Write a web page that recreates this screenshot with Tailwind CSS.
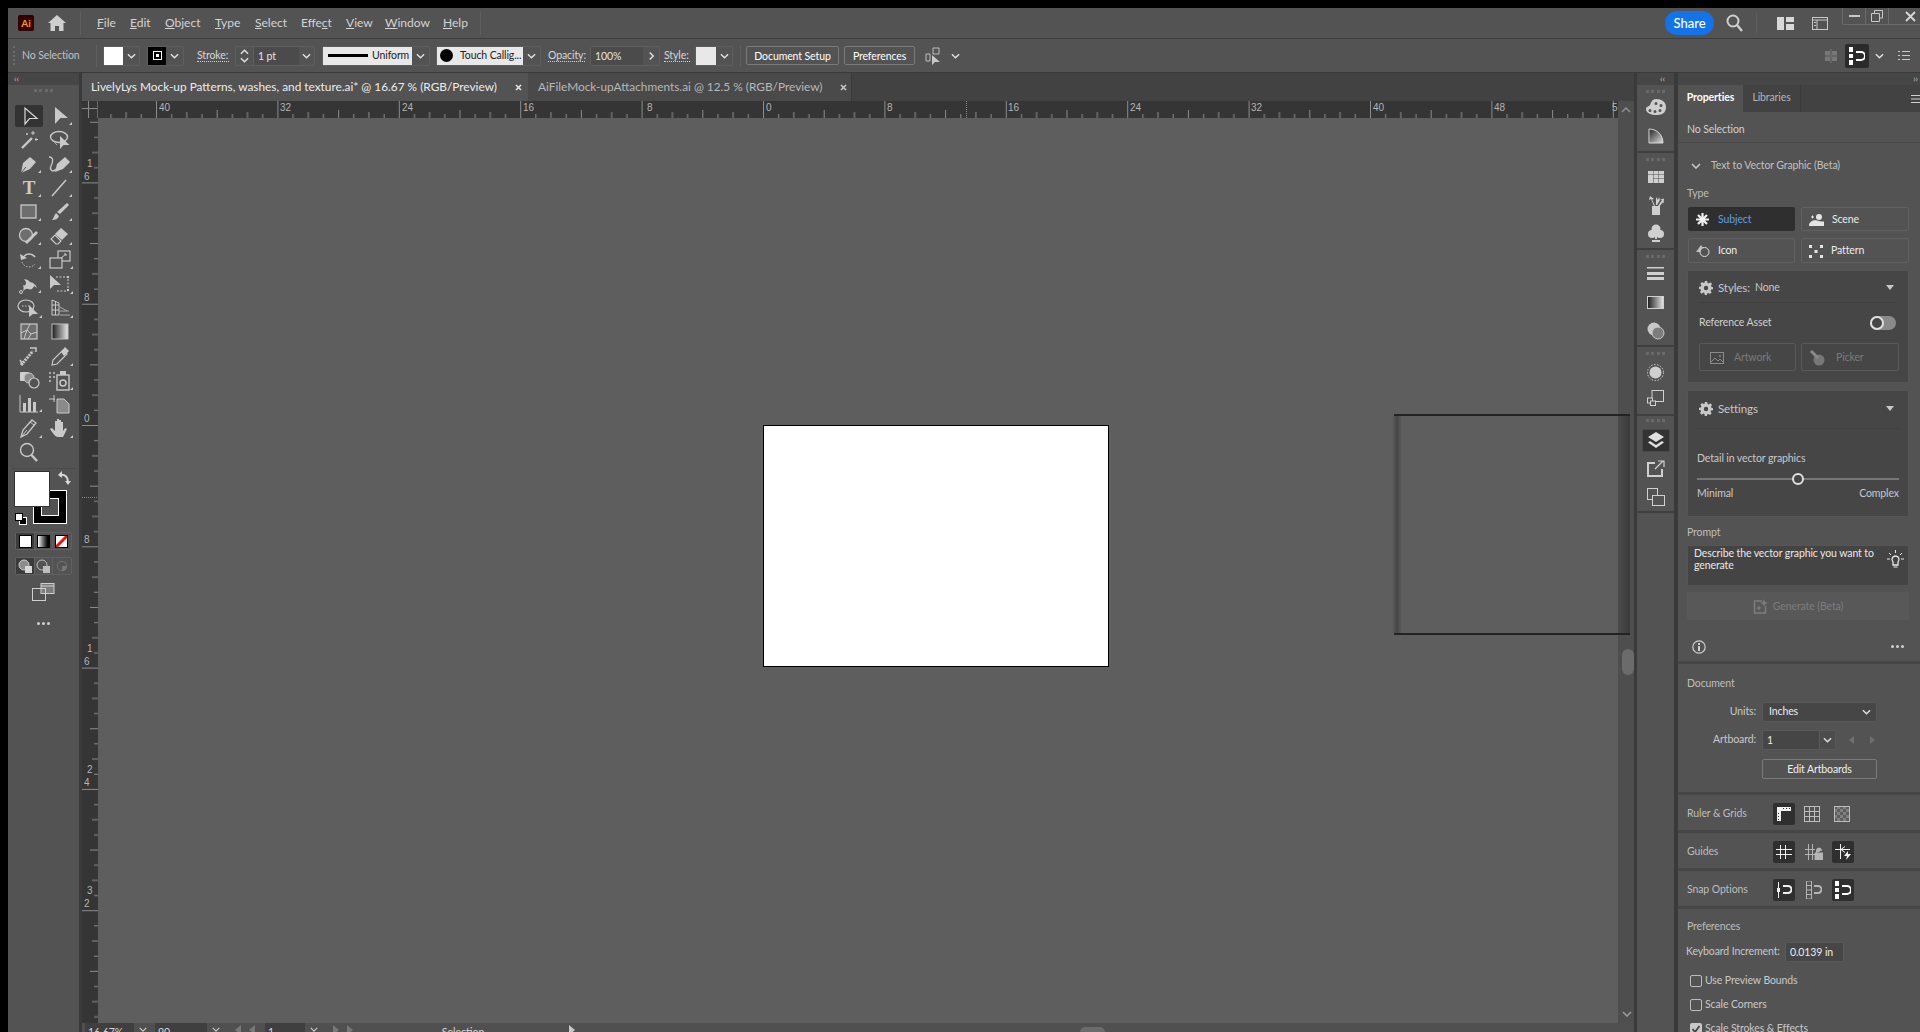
<!DOCTYPE html>
<html lang="en">
<head>
    <meta charset="UTF-8">
    <title>Adobe Illustrator</title>
    <script src="https://cdn.jsdelivr.net/npm/@tailwindcss/browser@4"></script>
</head>
<body class="bg-black overflow-hidden">
<!-- shared small glyphs -->
<svg class="absolute w-0 h-0">
    <defs>
        <symbol id="chev" viewBox="0 0 10 6"><path d="M1 1l4 4 4-4" fill="none" stroke="currentColor" stroke-width="1.6"/></symbol>
        <symbol id="gear" viewBox="0 0 16 16"><path fill="currentColor" fill-rule="evenodd" d="M6.6 0h2.8l.4 2.2 1.3.6L12.9 1.500l2 2-1.300 1.800.6 1.300L16 7v2.400l-2.200.4-.6 1.300 1.300 1.800-2 2-1.800-1.300-1.300.6L9 16H6.600l-.4-2.200-1.300-.6-1.800 1.300-2-2 1.300-1.800-.6-1.300L0 9V6.600l2.200-.4.6-1.300L1.500 3.100l2-2 1.800 1.300 1.300-.6zM8 5.500a2.500 2.500 0 100 5 2.500 2.500 0 000-5z"/></symbol>
        <symbol id="cn" viewBox="0 0 4 4"><path d="M4 0v4H0z" fill="currentColor"/></symbol>
        <pattern id="htick" patternUnits="userSpaceOnUse" x="-63.4" y="0" width="121.4" height="17">
            <path d="M.5 0v17M15.700 13v4M30.800 11v6M46 13v4M61.200 9v8M76.400 13v4M91.500 11v6M106.700 13v4" stroke="#8c8c8c" fill="none"/>
        </pattern>
        <pattern id="vtick" patternUnits="userSpaceOnUse" x="0" y="64.400" width="16" height="121.300">
            <path d="M0 .5h16M12 15.700h4M10 30.800h6M12 46h4M8 61.200h8M12 76.400h4M10 91.500h6M12 106.700h4" stroke="#8c8c8c" fill="none"/>
        </pattern>
        <pattern id="chk" patternUnits="userSpaceOnUse" width="6" height="6">
            <rect width="6" height="6" fill="#808080"/><path d="M0 0h3v3H0zM3 3h3v3H3z" fill="#5e5e5e"/>
        </pattern>
        <linearGradient id="grad"><stop offset="0" stop-color="#1c1c1c"/><stop offset="1" stop-color="#e8e8e8"/></linearGradient>
    </defs>
</svg>

<div class="w-[1920px] h-[1032px] pt-2 pl-2 flex flex-col overflow-hidden font-['Lato','Liberation_Sans',sans-serif] text-[11px] text-[#d2d2d2]">

    <!-- Title bar -->
    <div class="h-[30px] shrink-0 flex items-center bg-[#535353] text-[12px] text-[#d4d4d4]">
        <div class="ml-[10px] w-[16px] h-[16px] rounded-[2px] bg-[#330000] text-[#ff9a00] text-[10px] font-bold leading-[16px] text-center">Ai</div>
        <svg class="ml-[14px] w-[18px] h-[16px]" viewBox="0 0 18 16"><path fill="#cfcfcf" d="M9 0l9 8h-2.500v8h-4.500v-5H7v5H2.500V8H0z"/></svg>
        <div class="ml-[14px] w-px h-[24px] bg-[#5e5e5e]"></div>
        <div class="ml-[16px] flex">
            <span class="w-[33px]"><u>F</u>ile</span>
            <span class="w-[35px]"><u>E</u>dit</span>
            <span class="w-[50px]"><u>O</u>bject</span>
            <span class="w-[40px]"><u>T</u>ype</span>
            <span class="w-[46px]"><u>S</u>elect</span>
            <span class="w-[45px]">Effe<u>c</u>t</span>
            <span class="w-[39px]"><u>V</u>iew</span>
            <span class="w-[58px]"><u>W</u>indow</span>
            <span class="w-[37px]"><u>H</u>elp</span>
        </div>
        <div class="w-px h-[24px] bg-[#5e5e5e]"></div>
        <div class="ml-auto w-[49px] h-[24px] rounded-full bg-[#1473e6] text-white text-[13px] font-medium leading-[24px] text-center">Share</div>
        <svg class="ml-[12px] w-[17px] h-[18px]" viewBox="0 0 17 18"><circle cx="7" cy="7" r="5.500" fill="none" stroke="#cfcfcf" stroke-width="2"/><path d="M11 11l5 6" stroke="#cfcfcf" stroke-width="2.400"/></svg>
        <div class="ml-[13px] w-px h-[20px] bg-[#5e5e5e]"></div>
        <svg class="ml-[20px] w-[17px] h-[13px]" viewBox="0 0 17 13"><path fill="#d8d8d8" d="M0 0h7v13H0zM9 0h8v5H9zM9 7h8v6H9z"/></svg>
        <svg class="ml-[18px] w-[16px] h-[13px]" viewBox="0 0 16 13"><rect x=".5" y=".5" width="15" height="12" fill="none" stroke="#c8c8c8"/><path d="M0 3h16M5 3v10" stroke="#c8c8c8"/><path d="M2 5h2v1H2zM2 8h2v1H2z" fill="#c8c8c8"/></svg>
        <div class="ml-[14px] w-[78px] h-[17px] self-start flex border-l border-b border-[#6a6a6a] rounded-bl-[2px]">
            <div class="w-[23px] flex items-center justify-center border-r border-[#6a6a6a]"><div class="w-[11px] h-[2px] bg-[#c8c8c8]"></div></div>
            <div class="w-[23px] flex items-center justify-center border-r border-[#6a6a6a]">
                <svg class="w-[12px] h-[12px]" viewBox="0 0 12 12"><path d="M3.500 3V.5h8V8H9M.5 3.500h8v8h-8z" fill="none" stroke="#c8c8c8"/></svg>
            </div>
            <div class="flex-1 flex items-center justify-center pl-[12px]">
                <svg class="w-[11px] h-[11px]" viewBox="0 0 11 11"><path d="M1 1l9 9M10 1l-9 9" stroke="#d8d8d8" stroke-width="1.800"/></svg>
            </div>
        </div>
    </div>

    <!-- Control bar -->
    <div class="h-[34px] shrink-0 flex items-center bg-[#535353] border-t border-[#3d3d3d] text-[#d8d8d8] text-[10.5px] tracking-[-0.01em]">
        <div class="ml-[5px] w-[3px] h-[19px] border-l-2 border-dotted border-[#6d6d6d]"></div>
        <span class="ml-[6px] w-[56px] whitespace-nowrap text-[#c0c0c0]">No Selection</span>
        <div class="ml-[18px] w-px h-[22px] bg-[#5f5f5f]"></div>
        <div class="ml-[6px] flex h-[20px] w-[37px] border border-[#5f5f5f] rounded-[2px]">
            <div class="w-[19px] bg-white"></div>
            <div class="flex-1 flex items-center justify-center text-[#e0e0e0]"><svg class="w-[9px] h-[6px]"><use href="#chev"/></svg></div>
        </div>
        <div class="ml-[7px] flex h-[20px] w-[37px] border border-[#5f5f5f] rounded-[2px]">
            <div class="w-[18px] bg-black flex items-center justify-center"><div class="w-[9px] h-[9px] border border-white flex items-center justify-center"><div class="w-[3px] h-[3px] bg-white"></div></div></div>
            <div class="flex-1 flex items-center justify-center text-[#e0e0e0]"><svg class="w-[9px] h-[6px]"><use href="#chev"/></svg></div>
        </div>
        <span class="ml-[13px] w-[32px] border-b border-dotted border-[#d0d0d0] leading-[12px]">Stroke:</span>
        <div class="ml-[6px] flex h-[20px] w-[80px] border border-[#5f5f5f] rounded-[2px]">
            <div class="w-[18px] flex flex-col items-center justify-center gap-[2px] border-r border-[#5f5f5f] text-[#e0e0e0]">
                <svg class="w-[9px] h-[6px] rotate-180"><use href="#chev"/></svg>
                <svg class="w-[9px] h-[6px]"><use href="#chev"/></svg>
            </div>
            <div class="w-[45px] bg-[#4b4b4b] pl-[4px] leading-[18px] text-[#e4e4e4]">1 pt</div>
            <div class="flex-1 flex items-center justify-center text-[#e0e0e0]"><svg class="w-[9px] h-[6px]"><use href="#chev"/></svg></div>
        </div>
        <div class="ml-[7px] flex h-[20px] w-[108px] border border-[#5f5f5f] rounded-[2px]">
            <div class="w-[89px] bg-[#e8e8e8] flex items-center pl-[5px] text-[#222] whitespace-nowrap overflow-hidden"><div class="w-[40px] h-[3px] bg-black mr-[4px] shrink-0"></div>Uniform</div>
            <div class="flex-1 flex items-center justify-center text-[#e0e0e0]"><svg class="w-[9px] h-[6px]"><use href="#chev"/></svg></div>
        </div>
        <div class="ml-[6px] flex h-[20px] w-[105px] border border-[#5f5f5f] rounded-[2px]">
            <div class="w-[86px] bg-[#e8e8e8] flex items-center pl-[3px] text-[#222] whitespace-nowrap"><div class="w-[13px] h-[13px] rounded-full bg-black mr-[7px] shrink-0"></div>Touch Callig...</div>
            <div class="flex-1 flex items-center justify-center text-[#e0e0e0]"><svg class="w-[9px] h-[6px]"><use href="#chev"/></svg></div>
        </div>
        <span class="ml-[7px] w-[37px] border-b border-dotted border-[#d0d0d0] leading-[12px]">Opacity:</span>
        <div class="ml-[5px] flex h-[20px] w-[70px] border border-[#5f5f5f] rounded-[2px]">
            <div class="w-[52px] bg-[#4b4b4b] pl-[4px] leading-[18px] text-[#e4e4e4]">100%</div>
            <div class="flex-1 flex items-center justify-center text-[#e0e0e0]"><svg class="w-[9px] h-[6px] -rotate-90"><use href="#chev"/></svg></div>
        </div>
        <span class="ml-[4px] w-[26px] border-b border-dotted border-[#d0d0d0] leading-[12px]">Style:</span>
        <div class="ml-[5px] flex h-[20px] w-[38px] border border-[#5f5f5f] rounded-[2px]">
            <div class="w-[20px] bg-[#e8e8e8]"></div>
            <div class="flex-1 flex items-center justify-center text-[#e0e0e0]"><svg class="w-[9px] h-[6px]"><use href="#chev"/></svg></div>
        </div>
        <div class="ml-[7px] w-px h-[22px] bg-[#5f5f5f]"></div>
        <div class="ml-[5px] w-[93px] h-[19px] border border-[#7a7a7a] rounded-[2px] text-center leading-[18px] text-white">Document Setup</div>
        <div class="ml-[5px] w-[71px] h-[19px] border border-[#7a7a7a] rounded-[2px] text-center leading-[18px] text-white">Preferences</div>
        <svg class="ml-[10px] w-[17px] h-[18px]" viewBox="0 0 17 18"><path d="M1 7h4v7H1zM8 1h6v6H8z" fill="none" stroke="#bdbdbd"/><path d="M7 8v10l3-3h5z" fill="#c8c8c8"/></svg>
        <svg class="ml-[9px] w-[9px] h-[6px] text-[#e0e0e0]"><use href="#chev"/></svg>
        <svg class="ml-auto w-[12px] h-[14px]" viewBox="0 0 12 14"><path fill="#777" d="M0 2h5v4H0zM7 2h5v4H7zM0 8h5v4H0zM7 8h5v4H7z"/><path d="M6 0v14M0 7h12" stroke="#777"/></svg>
        <div class="ml-[8px] w-[24px] h-[24px] rounded-[2px] bg-[#2b2b2b] flex items-center justify-center">
            <svg class="w-[16px] h-[18px]" viewBox="0 0 16 18"><path fill="#fff" d="M0 0h4v5H0zM0 7h4v4H0zM0 13h4v5H0z"/><path d="M7 5h5a3.500 3.500 0 010 8H7" fill="none" stroke="#fff" stroke-width="2"/></svg>
        </div>
        <svg class="ml-[6px] w-[9px] h-[6px] text-[#e0e0e0]"><use href="#chev"/></svg>
        <svg class="ml-[14px] mr-[10px] w-[12px] h-[11px]" viewBox="0 0 12 11"><path d="M4 1.500h8M4 5.500h8M4 9.500h8" stroke="#c8c8c8"/><path d="M0 1h2v1H0zM0 5h2v1H0zM0 9h2v1H0z" fill="#c8c8c8"/></svg>
    </div>

    <!-- Work area -->
    <div class="h-[960px] shrink-0 flex bg-[#3a3a3a]">

        <!-- Tools -->
        <div class="w-[71px] shrink-0 flex flex-col border-t border-[#3a3a3a] bg-[#535353]">
            <div class="h-[12px] bg-[#464646] text-[#bdbdbd] text-[9px] leading-[11px] pl-[6px]">‹‹</div>
            <div class="h-[20px] flex items-start justify-center pt-[4px]"><div class="w-[19px] h-[3px] border-t-[3px] border-dotted border-[#696969]"></div></div>
            <div class="grid grid-cols-[31px_31px] auto-rows-[24px] pl-[5px] text-[#c9c9c9]">
                <svg class="w-[28px] h-[22px] mx-auto bg-[#333] rounded-[2px]" viewBox="0 0 28 22"><path d="M10 3v16l4.500-5.500H22z" fill="none" stroke="#d8d8d8" stroke-width="1.200"/></svg>
                <svg class="w-[28px] h-[22px] mx-auto" viewBox="0 0 28 22"><path d="M9 2v17l5.500-6H22z" fill="currentColor"/><use href="#cn" x="23" y="17" width="3" height="3"/></svg>
                <svg class="w-[28px] h-[22px] mx-auto" viewBox="0 0 28 22"><path d="M7 19L17 9" stroke="currentColor" stroke-width="2.400"/><path d="M18 2v4M16 4h4M12 4v2M11 5h2M21 9v3M20 10.500h3" stroke="currentColor"/></svg>
                <svg class="w-[28px] h-[22px] mx-auto" viewBox="0 0 28 22"><ellipse cx="13" cy="8" rx="8.500" ry="5.500" fill="none" stroke="currentColor" stroke-width="1.400"/><path d="M14 7v13l3.500-4 6 0z" fill="currentColor"/><path d="M8 12c1 2 2 3 3 4" stroke="currentColor"/></svg>
                <svg class="w-[28px] h-[22px] mx-auto" viewBox="0 0 28 22"><path d="M6 20l2-10 7-6 6 5-6 7z" fill="currentColor"/><path d="M6 20l5-6" stroke="#535353"/><use href="#cn" x="23" y="17" width="3" height="3"/></svg>
                <svg class="w-[28px] h-[22px] mx-auto" viewBox="0 0 28 22"><path d="M3 4c5 0 4 5 2 9s2 7 5 3" fill="none" stroke="currentColor" stroke-width="1.300"/><path d="M9 19l2-8 8-7 5 5-7 7z" fill="currentColor"/><use href="#cn" x="23" y="17" width="3" height="3"/></svg>
                <svg class="w-[28px] h-[22px] mx-auto" viewBox="0 0 28 22"><text x="14" y="17" text-anchor="middle" font-family="Liberation Serif" font-weight="700" font-size="19" fill="currentColor">T</text><use href="#cn" x="23" y="17" width="3" height="3"/></svg>
                <svg class="w-[28px] h-[22px] mx-auto" viewBox="0 0 28 22"><path d="M6 19L20 3" stroke="currentColor" stroke-width="1.500"/><use href="#cn" x="23" y="17" width="3" height="3"/></svg>
                <svg class="w-[28px] h-[22px] mx-auto" viewBox="0 0 28 22"><rect x="6" y="4" width="15" height="13" fill="#6e6e6e" stroke="currentColor" stroke-width="1.300"/><use href="#cn" x="23" y="17" width="3" height="3"/></svg>
                <svg class="w-[28px] h-[22px] mx-auto" viewBox="0 0 28 22"><path d="M21 2l2 2-9 9-3-2z" fill="currentColor"/><path d="M10 12l3 3c-1 3-4 4-7 4 2-2 2-5 4-7z" fill="currentColor"/><use href="#cn" x="23" y="17" width="3" height="3"/></svg>
                <svg class="w-[28px] h-[22px] mx-auto" viewBox="0 0 28 22"><circle cx="11" cy="10" r="6.500" fill="#6e6e6e" stroke="currentColor" stroke-width="1.300"/><path d="M11 18L22 7" stroke="currentColor" stroke-width="2.600"/><use href="#cn" x="23" y="17" width="3" height="3"/></svg>
                <svg class="w-[28px] h-[22px] mx-auto" viewBox="0 0 28 22"><path d="M15 3l7 6-6 6-7-6z" fill="currentColor"/><path d="M9 10l6 6-3 3-2 0-5-5z" fill="none" stroke="currentColor" stroke-width="1.200"/><use href="#cn" x="23" y="17" width="3" height="3"/></svg>
                <svg class="w-[28px] h-[22px] mx-auto" viewBox="0 0 28 22"><path d="M8 9a7 7 0 0112-1" fill="none" stroke="currentColor" stroke-width="1.500"/><path d="M5 5l1 6 6-2z" fill="currentColor"/><path d="M7 13a7.500 7.500 0 0013 2" fill="none" stroke="currentColor" stroke-dasharray="1.500 1.500"/><use href="#cn" x="23" y="17" width="3" height="3"/></svg>
                <svg class="w-[28px] h-[22px] mx-auto" viewBox="0 0 28 22"><rect x="12" y="2" width="12" height="10" fill="none" stroke="currentColor" stroke-width="1.200"/><rect x="4" y="9" width="12" height="10" fill="#535353" stroke="currentColor" stroke-width="1.200"/><path d="M15 9l5-4M18 5h2v2" fill="none" stroke="currentColor"/><use href="#cn" x="24" y="17" width="3" height="3"/></svg>
                <svg class="w-[28px] h-[22px] mx-auto" viewBox="0 0 28 22"><path d="M6 19c3-1 3-4 2-7 2 1 3 0 3-3l-2-3 4 1c2 3 4 2 5 3s3 2 4 5l-3-2c-1 3-3 4-6 3s-4 2-6 3z" fill="currentColor"/><circle cx="6" cy="19" r="1.500" fill="#535353" stroke="currentColor"/><use href="#cn" x="23" y="17" width="3" height="3"/></svg>
                <svg class="w-[28px] h-[22px] mx-auto" viewBox="0 0 28 22"><path d="M10 4h12v14H10" fill="none" stroke="currentColor" stroke-dasharray="2 1.500"/><path d="M4 2v14l4-4h7z" fill="currentColor"/><path d="M21 3h2v2h-2zM21 16h2v2h-2z" fill="currentColor"/><use href="#cn" x="24" y="18" width="3" height="3"/></svg>
                <svg class="w-[28px] h-[22px] mx-auto" viewBox="0 0 28 22"><ellipse cx="11" cy="9" rx="8" ry="6" fill="none" stroke="currentColor" stroke-width="1.200"/><path d="M7 9h7" stroke="currentColor" stroke-dasharray="1.500 1.500"/><path d="M14 8v12l4-3 5 0z" fill="currentColor"/><use href="#cn" x="24" y="18" width="3" height="3"/></svg>
                <svg class="w-[28px] h-[22px] mx-auto" viewBox="0 0 28 22"><path d="M6 3l7 3v12H6zM6 8h7M6 13h7M9.500 4v14" fill="none" stroke="currentColor"/><path d="M14 10l7 4M14 14h9M14 18h10" stroke="#a9a9a9"/><use href="#cn" x="24" y="18" width="3" height="3"/></svg>
                <svg class="w-[28px] h-[22px] mx-auto" viewBox="0 0 28 22"><rect x="6" y="3" width="16" height="15" fill="#6e6e6e" stroke="currentColor" stroke-width="1.200"/><path d="M6 12l6-3 3-6M12 9l4 4 6-2M16 13l-3 5M9 18l3-9" fill="none" stroke="currentColor"/></svg>
                <svg class="w-[28px] h-[22px] mx-auto" viewBox="0 0 28 22"><rect x="6" y="3" width="16" height="15" fill="url(#grad)" stroke="#bdbdbd"/></svg>
                <svg class="w-[28px] h-[22px] mx-auto" viewBox="0 0 28 22"><path d="M6 20L18 6" stroke="currentColor" stroke-width="3" stroke-dasharray="2 1"/><path d="M15 3h6v4M5 15l3 5" stroke="currentColor" stroke-width="1.500" fill="none"/></svg>
                <svg class="w-[28px] h-[22px] mx-auto" viewBox="0 0 28 22"><path d="M6 20l1-5L17 5l4 4-10 10z" fill="none" stroke="currentColor" stroke-width="1.200"/><path d="M15 7l4-5 4 4-5 5z" fill="currentColor"/><use href="#cn" x="24" y="18" width="3" height="3"/></svg>
                <svg class="w-[28px] h-[22px] mx-auto" viewBox="0 0 28 22"><rect x="5" y="3" width="9" height="9" fill="#cfcfcf" rx="1"/><circle cx="14" cy="9" r="5" fill="#8a8a8a" stroke="currentColor"/><circle cx="19" cy="14" r="5" fill="#535353" stroke="currentColor" stroke-width="1.200"/></svg>
                <svg class="w-[28px] h-[22px] mx-auto" viewBox="0 0 28 22"><path d="M3 3h2v2H3zM7 3h2v2H7zM3 7h2v2H3zM7 7h2v2H7zM3 11h2v2H3z" fill="#a9a9a9"/><rect x="11" y="6" width="12" height="15" fill="none" stroke="currentColor" stroke-width="1.400"/><rect x="14" y="2" width="6" height="4" fill="currentColor"/><circle cx="17" cy="14" r="3" fill="none" stroke="currentColor" stroke-width="1.500"/><use href="#cn" x="24" y="18" width="3" height="3"/></svg>
                <svg class="w-[28px] h-[22px] mx-auto" viewBox="0 0 28 22"><path d="M5 2v17h18" fill="none" stroke="currentColor"/><path d="M8 10h3v9H8zM13 5h3v14h-3zM18 9h3v10h-3z" fill="currentColor"/><use href="#cn" x="24" y="16" width="3" height="3"/></svg>
                <svg class="w-[28px] h-[22px] mx-auto" viewBox="0 0 28 22"><path d="M3 6h6M8 2v7" stroke="currentColor"/><path d="M11 6h7l5 5v9H11z" fill="#8a8a8a" stroke="currentColor"/></svg>
                <svg class="w-[28px] h-[22px] mx-auto" viewBox="0 0 28 22"><path d="M6 20l2-7 9-10 4 3-9 11z" fill="none" stroke="currentColor" stroke-width="1.300"/><path d="M15 5l4 3" stroke="currentColor"/><path d="M7 19l5-6" stroke="currentColor"/><use href="#cn" x="24" y="18" width="3" height="3"/></svg>
                <svg class="w-[28px] h-[22px] mx-auto" viewBox="0 0 28 22"><path d="M12 20c-3 0-5-4-8-8l2-1 3 3V4h2v6-8h2v8V3h2v7-5h2v9l2-3 2 1-4 8z" fill="currentColor"/><use href="#cn" x="24" y="18" width="3" height="3"/></svg>
                <svg class="w-[28px] h-[22px] mx-auto" viewBox="0 0 28 22"><circle cx="12" cy="9" r="6.500" fill="none" stroke="currentColor" stroke-width="1.400"/><path d="M16.500 14l5.500 6" stroke="currentColor" stroke-width="2.400"/></svg>
            </div>
            <div class="mt-[3px] mx-[4px] h-px bg-[#4a4a4a]"></div>
            <!-- fill and stroke -->
            <div class="relative h-[70px] mt-[2px]">
                <div class="absolute left-[25px] top-[19px] w-[34px] h-[34px] bg-black border border-white flex items-center justify-center"><div class="w-[18px] h-[18px] bg-[#535353] border border-white"></div></div>
                <div class="absolute left-[6px] top-[0px] w-[36px] h-[36px] bg-white border border-[#333]"></div>
                <svg class="absolute left-[50px] top-[0px] w-[13px] h-[14px]" viewBox="0 0 13 14"><path d="M2 4c5-1 8 2 8 7" fill="none" stroke="#d8d8d8" stroke-width="2"/><path d="M4 0v7L0 4zM7 10h6l-3 4z" fill="#d8d8d8"/></svg>
                <div class="absolute left-[11px] top-[46px] w-[8px] h-[8px] bg-black border border-white"></div>
                <div class="absolute left-[7px] top-[42px] w-[8px] h-[8px] bg-white border border-black"></div>
            </div>
            <div class="mt-[-9px] mx-[7px] h-[18px] grid grid-cols-3 border border-[#616161] rounded-[2px]">
                <div class="bg-[#3b3b3b] flex items-center justify-center"><div class="w-[13px] h-[13px] bg-white border border-black"></div></div>
                <div class="flex items-center justify-center border-x border-[#616161]"><div class="w-[13px] h-[13px] border border-black bg-gradient-to-r from-white to-black"></div></div>
                <svg class="w-[13px] h-[13px] m-auto" viewBox="0 0 13 13"><rect width="13" height="13" fill="#fff"/><path d="M0 13L13 0" stroke="#e11" stroke-width="3"/><rect x=".5" y=".5" width="12" height="12" fill="none" stroke="#000"/></svg>
            </div>
            <div class="mt-[7px] mx-[7px] h-[18px] grid grid-cols-3 border border-[#616161] rounded-[2px]">
                <div class="bg-[#3b3b3b] flex items-center justify-center"><svg class="w-[14px] h-[14px]" viewBox="0 0 14 14"><circle cx="6" cy="6" r="5" fill="#8c8c8c" stroke="#d0d0d0"/><rect x="7" y="7" width="7" height="7" fill="#d8d8d8"/></svg></div>
                <div class="flex items-center justify-center border-x border-[#616161]"><svg class="w-[14px] h-[14px]" viewBox="0 0 14 14"><circle cx="6" cy="6" r="5" fill="#535353" stroke="#bdbdbd"/><rect x="7" y="7" width="7" height="7" fill="#bdbdbd"/></svg></div>
                <svg class="w-[12px] h-[12px] m-auto" viewBox="0 0 14 14"><circle cx="7" cy="7" r="5.500" fill="none" stroke="#777"/><path d="M7 7h6a6 6 0 01-6 6z" fill="#777"/></svg>
            </div>
            <svg class="mt-[8px] mx-auto w-[23px] h-[18px]" viewBox="0 0 23 18"><rect x="9" y=".5" width="13" height="10" fill="#7c7c7c" stroke="#cfcfcf"/><path d="M9 3h13" stroke="#cfcfcf"/><rect x=".5" y="5.500" width="13" height="12" fill="none" stroke="#cfcfcf"/></svg>
            <div class="mt-[21px] flex justify-center gap-[2px]">
                <div class="w-[3px] h-[3px] rounded-full bg-[#d0d0d0]"></div>
                <div class="w-[3px] h-[3px] rounded-full bg-[#d0d0d0]"></div>
                <div class="w-[3px] h-[3px] rounded-full bg-[#d0d0d0]"></div>
            </div>
        </div>

        <!-- Document area -->
        <div class="ml-[3px] w-[1552px] shrink-0 flex flex-col">
            <div class="h-[29px] shrink-0 flex bg-[#424242] border-t border-[#3a3a3a] text-[11.85px]">
                <div class="w-[446px] flex items-center bg-[#535353] pl-[9px] text-[#ececec]">
                    <span class="w-[424px] whitespace-nowrap">LivelyLys Mock-up Patterns, washes, and texture.ai* @ 16.67 % (RGB/Preview)</span>
                    <svg class="w-[7px] h-[7px]" viewBox="0 0 7 7"><path d="M1 1l5 5M6 1L1 6" stroke="#e4e4e4" stroke-width="1.600"/></svg>
                </div>
                <div class="w-[324px] flex items-center bg-[#4a4a4a] border-r border-[#3a3a3a] pl-[10px] text-[#b8b8b8]">
                    <span class="w-[302px] whitespace-nowrap">AiFileMock-upAttachments.ai @ 12.5 % (RGB/Preview)</span>
                    <svg class="w-[7px] h-[7px]" viewBox="0 0 7 7"><path d="M1 1l5 5M6 1L1 6" stroke="#c8c8c8" stroke-width="1.600"/></svg>
                </div>
            </div>
            <div class="h-[17px] shrink-0 flex bg-[#353535]">
                <svg class="w-[16px] h-[17px] shrink-0" viewBox="0 0 16 17"><path d="M0 7.500h16M6.500 0v17" stroke="#8a8a8a"/><path d="M15.500 0v17" stroke="#6a6a6a"/></svg>
                <svg class="w-[1520px] h-[17px] shrink-0" viewBox="0 0 1520 17" font-family="Liberation Sans" font-size="10" fill="#b4b4b4">
                    <rect width="1520" height="17" fill="url(#htick)"/>
                    <path d="M868.500 0v17" stroke="#8a8a8a" stroke-dasharray="1 1"/>
                    <text x="61" y="10">40</text><text x="182" y="10">32</text><text x="304" y="10">24</text><text x="425" y="10">16</text>
                    <text x="549" y="10">8</text><text x="668" y="10">0</text><text x="789" y="10">8</text><text x="910" y="10">16</text>
                    <text x="1032" y="10">24</text><text x="1153" y="10">32</text><text x="1275" y="10">40</text><text x="1396" y="10">48</text><text x="1514" y="10">5</text>
                </svg>
                <div class="w-[16px] flex items-center justify-center bg-[#4e4e4e] text-[#8e8e8e]"><svg class="w-[10px] h-[6px] rotate-180"><use href="#chev"/></svg></div>
            </div>
            <div class="h-[905px] shrink-0 flex">
                <svg class="w-[16px] h-[905px] shrink-0 bg-[#353535]" viewBox="0 0 16 905" font-family="Liberation Sans" font-size="10" fill="#b4b4b4">
                    <rect width="16" height="905" fill="url(#vtick)"/>
                    <path d="M0 379.500h16" stroke="#8a8a8a" stroke-dasharray="1 1"/>
                    <text x="5" y="49">1</text><text x="2" y="62">6</text>
                    <text x="2" y="183">8</text><text x="2" y="304">0</text><text x="2" y="425">8</text>
                    <text x="5" y="534">1</text><text x="2" y="547">6</text>
                    <text x="5" y="655">2</text><text x="2" y="668">4</text>
                    <text x="5" y="776">3</text><text x="2" y="789">2</text>
                </svg>
                <div class="relative w-[1520px] shrink-0 bg-[#5e5e5e]">
                    <div class="absolute left-[665px] top-[307px] w-[346px] h-[242px] bg-white border border-black"></div>
                    <!-- neighbouring artboard, runs over the scrollbar -->
                    <div class="absolute left-[1296px] top-[296px] w-[236px] h-[221px] z-10 border-y-2 border-[#232323]">
                        <div class="absolute left-[-2px] top-0 bottom-0 w-[10px] bg-gradient-to-r from-transparent via-[#454545] to-transparent"></div>
                        <div class="absolute right-0 top-0 bottom-0 w-[14px] bg-gradient-to-r from-transparent to-[#3a3a3a]"></div>
                    </div>
                </div>
                <div class="relative w-[16px] shrink-0 bg-[#4e4e4e] text-[#9a9a9a]">
                    <div class="absolute left-[4px] top-[531px] w-[12px] h-[26px] rounded-full bg-[#6b6b6b]"></div>
                    <svg class="absolute left-[4px] top-[893px] w-[10px] h-[6px]"><use href="#chev"/></svg>
                </div>
            </div>
            <!-- status bar, cut off by the window edge -->
            <div class="h-[9px] flex bg-[#505050] text-[10.5px] leading-[18px] text-[#d8d8d8] overflow-hidden">
                <div class="ml-[3px] w-[49px] h-[18px] bg-[#3f3f3f] pl-[3px]">16.67%</div>
                <div class="w-[18px] flex justify-center pt-[4px] text-[#c8c8c8]"><svg class="w-[8px] h-[5px]"><use href="#chev"/></svg></div>
                <div class="ml-[3px] w-[52px] h-[18px] bg-[#3f3f3f] pl-[3px]">90</div>
                <div class="w-[17px] flex justify-center pt-[4px] text-[#c8c8c8]"><svg class="w-[8px] h-[5px]"><use href="#chev"/></svg></div>
                <div class="w-[41px] flex items-start justify-center gap-[8px] pt-[2px]">
                    <div class="w-0 h-0 border-y-[5px] border-y-transparent border-r-[6px] border-r-[#777]"></div>
                    <div class="w-0 h-0 border-y-[5px] border-y-transparent border-r-[6px] border-r-[#777]"></div>
                </div>
                <div class="w-[40px] h-[18px] bg-[#3f3f3f] pl-[3px]">1</div>
                <div class="w-[17px] flex justify-center pt-[4px] text-[#c8c8c8]"><svg class="w-[8px] h-[5px]"><use href="#chev"/></svg></div>
                <div class="w-[41px] flex items-start justify-center gap-[8px] pt-[2px]">
                    <div class="w-0 h-0 border-y-[5px] border-y-transparent border-l-[6px] border-l-[#777]"></div>
                    <div class="w-0 h-0 border-y-[5px] border-y-transparent border-l-[6px] border-l-[#777]"></div>
                </div>
                <div class="w-[200px] text-center">Selection</div>
                <div class="ml-[6px] mt-[2px] w-0 h-0 border-y-[5px] border-y-transparent border-l-[6px] border-l-[#c8c8c8]"></div>
                <div class="ml-[505px] mt-[4px] w-[25px] h-[5px] rounded-t-full bg-[#6b6b6b]"></div>
            </div>
        </div>

        <!-- Panel dock -->
        <div class="ml-[3px] w-[37px] shrink-0 flex flex-col bg-[#535353] border-t border-[#3a3a3a] text-[#cfcfcf]">
            <div class="h-[12px] bg-[#464646] text-[#bdbdbd] text-[9px] leading-[11px] pl-[23px]">‹‹</div>
            <div class="h-[68px] flex flex-col items-center border-b-2 border-[#3f3f3f]">
                <div class="mt-[5px] w-[19px] h-[3px] border-t-[3px] border-dotted border-[#696969]"></div>
                <svg class="mt-[6px] w-[20px] h-[16px]" viewBox="0 0 20 16"><path fill-rule="evenodd" fill="currentColor" d="M10 0c6 0 10 3 10 8s-3 8-9 8-11-2-11-6c0-3 3-2 4-4s2-6 6-6zM4 10a1.500 1.500 0 100 3 1.500 1.500 0 000-3zM9 11a1.500 1.500 0 100 3 1.500 1.500 0 000-3zM14 10a1.500 1.500 0 100 3 1.500 1.500 0 000-3zM15 5a1.500 1.500 0 100 3 1.500 1.500 0 000-3zM10 3a1.500 1.500 0 100 3 1.500 1.500 0 000-3z"/></svg>
                <svg class="mt-[13px] w-[16px] h-[16px]" viewBox="0 0 16 16"><defs><linearGradient id="swgrad" x1="0" y1="0" x2="1" y2="1"><stop offset="0" stop-color="#222"/><stop offset="1" stop-color="#ddd"/></linearGradient></defs><path d="M1 1c8 0 14 6 14 14H1z" fill="url(#swgrad)" stroke="#d8d8d8"/></svg>
            </div>
            <div class="h-[97px] flex flex-col items-center border-b-2 border-[#3f3f3f]">
                <div class="mt-[5px] w-[19px] h-[3px] border-t-[3px] border-dotted border-[#696969]"></div>
                <svg class="mt-[10px] w-[16px] h-[12px]" viewBox="0 0 16 12"><path fill="currentColor" d="M0 0h5v3.500H0zM5.500 0h5v3.500h-5zM11 0h5v3.500h-5zM0 4h5v8H0zM5.500 4h5v3.500h-5zM5.500 8h5v4h-5zM11 4h5v3.500h-5zM11 8h5v4h-5z"/></svg>
                <svg class="mt-[12px] w-[16px] h-[20px]" viewBox="0 0 16 20"><path fill="currentColor" d="M4 11h8v9H4zM6 11L3 4 1 5l1-4 4 3-2 .5 3 6zM8 10V2l2 3 1-3 1 3-3 5zM10 11l4-6-2-.5 4-1-.5 5-1-1-3 4z"/></svg>
                <svg class="mt-[9px] w-[16px] h-[18px]" viewBox="0 0 16 18"><circle cx="8" cy="5" r="4.500" fill="currentColor"/><circle cx="4" cy="10" r="4" fill="currentColor"/><circle cx="12" cy="10" r="4" fill="currentColor"/><path d="M8 8v7M4 17h8" stroke="currentColor" stroke-width="2"/></svg>
            </div>
            <div class="h-[97px] flex flex-col items-center border-b-2 border-[#3f3f3f]">
                <div class="mt-[5px] w-[19px] h-[3px] border-t-[3px] border-dotted border-[#696969]"></div>
                <svg class="mt-[9px] w-[17px] h-[13px]" viewBox="0 0 17 13"><path fill="currentColor" d="M0 0h17v1.500H0zM0 5h17v3H0zM0 10h17v3H0z"/></svg>
                <svg class="mt-[16px] w-[17px] h-[13px]" viewBox="0 0 17 13"><rect x=".5" y=".5" width="16" height="12" fill="url(#grad)" stroke="#d0d0d0"/></svg>
                <svg class="mt-[13px] w-[18px] h-[18px]" viewBox="0 0 18 18"><circle cx="7" cy="7" r="6.500" fill="#c8c8c8"/><circle cx="11" cy="11" r="6" fill="#7d7d7d" stroke="#c8c8c8"/></svg>
            </div>
            <div class="h-[69px] flex flex-col items-center border-b-2 border-[#3f3f3f]">
                <div class="mt-[5px] w-[19px] h-[3px] border-t-[3px] border-dotted border-[#696969]"></div>
                <svg class="mt-[9px] w-[17px] h-[17px]" viewBox="0 0 17 17"><circle cx="8.500" cy="8.500" r="6" fill="currentColor"/><circle cx="8.500" cy="8.500" r="8" fill="none" stroke="currentColor" stroke-dasharray="1.500 1.500"/></svg>
                <svg class="mt-[9px] w-[17px] h-[16px]" viewBox="0 0 17 16"><rect x="5" y=".5" width="11.500" height="11" fill="none" stroke="currentColor"/><rect x=".5" y="8" width="5" height="5" fill="#535353" stroke="currentColor"/><rect x="3.500" y="11" width="5" height="4.500" fill="#535353" stroke="currentColor"/></svg>
            </div>
            <div class="h-[97px] flex flex-col items-center border-b-2 border-[#3f3f3f]">
                <div class="mt-[3px] w-[19px] h-[3px] border-t-[3px] border-dotted border-[#696969]"></div>
                <div class="mt-[7px] w-[28px] h-[23px] rounded-[2px] bg-[#333] border border-[#4a4a4a] flex items-center justify-center">
                    <svg class="w-[16px] h-[17px]" viewBox="0 0 16 17"><path fill="#e0e0e0" d="M8 0l8 5-8 5-8-5zM2 9l6 4 6-4 2 1.500L8 16 0 10.500z"/></svg>
                </div>
                <svg class="mt-[8px] w-[18px] h-[17px]" viewBox="0 0 18 17"><path d="M8 3H1v13h14V9" fill="none" stroke="currentColor" stroke-width="2"/><path d="M8 9l8-8M11 1h6v6" fill="none" stroke="currentColor" stroke-width="1.200"/></svg>
                <svg class="mt-[11px] w-[18px] h-[18px]" viewBox="0 0 18 18"><rect x=".5" y=".5" width="10" height="11" fill="none" stroke="currentColor"/><rect x="5.500" y="7.500" width="12" height="10" fill="#535353" stroke="currentColor"/></svg>
            </div>
        </div>

        <!-- Properties panel -->
        <div class="ml-[4px] w-[242px] shrink-0 flex flex-col bg-[#535353] border-t border-[#3a3a3a] text-[#c8c8c8] text-[10.5px] tracking-[-0.01em]">
            <div class="h-[12px] shrink-0 bg-[#464646] text-[#bdbdbd] text-[9px] leading-[11px] text-right pr-[2px]">››</div>
            <div class="h-[27px] shrink-0 flex bg-[#424242] items-stretch">
                <div class="w-[65px] bg-[#535353] text-center leading-[25px] text-white font-bold">Properties</div>
                <div class="w-[58px] text-center leading-[25px] text-[#b4b4b4] border-r border-[#3a3a3a]">Libraries</div>
                <svg class="ml-auto mt-[10px] w-[9px] h-[8px]" viewBox="0 0 9 8"><path d="M0 .5h9M0 4h9M0 7.500h9" stroke="#d0d0d0"/></svg>
            </div>
            <div class="h-[31px] shrink-0 pl-[9px] pt-[10px] text-[#cfcfcf] border-b border-[#4a4a4a]">No Selection</div>

            <!-- Text to vector -->
            <div class="h-[521px] shrink-0 pl-[9px] pr-[11px] border-b-[3px] border-[#464646]">
                <div class="h-[40px] flex items-center pt-[6px]">
                    <svg class="ml-[4px] w-[10px] h-[6px] text-[#c8c8c8]"><use href="#chev"/></svg>
                    <span class="ml-[10px] text-[#c0c0c0]">Text to Vector Graphic (Beta)</span>
                </div>
                <div class="h-[20px] leading-[20px] text-[#bdbdbd]">Type</div>
                <div class="mt-[4px] grid grid-cols-[107px_108px] gap-x-[6px] gap-y-[7px] ml-[1px] text-[#ececec]">
                    <div class="h-[24px] rounded-[2px] bg-[#2f2f2f] flex items-center pl-[8px] pt-[1px] gap-[9px] text-[#5c9ee8]">
                        <svg class="w-[13px] h-[13px]" viewBox="0 0 13 13"><path d="M6.500 0v13M0 6.500h13M2 2l9 9M11 2l-9 9" stroke="#f0f0f0" stroke-width="2.200"/></svg>Subject
                    </div>
                    <div class="h-[24px] rounded-[2px] border border-[#616161] flex items-center pl-[7px] pt-[1px] gap-[8px]">
                        <svg class="w-[15px] h-[12px]" viewBox="0 0 15 12"><circle cx="10" cy="3" r="3" fill="#e4e4e4"/><path d="M0 12c1-5 5-6 8-5s5 1 7 1v4zM2 3h3M3.500 1.500v3" stroke="#e4e4e4" fill="#e4e4e4"/></svg>Scene
                    </div>
                    <div class="h-[25px] rounded-[2px] border border-[#616161] flex items-center pl-[7px] pt-[1px] gap-[8px]">
                        <svg class="w-[14px] h-[12px]" viewBox="0 0 14 12"><path d="M5 0l5 7H0z" fill="#bdbdbd"/><circle cx="8.500" cy="7" r="4.500" fill="#535353" stroke="#e0e0e0"/></svg>Icon
                    </div>
                    <div class="h-[25px] rounded-[2px] border border-[#616161] flex items-center pl-[7px] pt-[1px] gap-[8px]">
                        <svg class="w-[14px] h-[13px]" viewBox="0 0 14 13"><path d="M0 0h3v3H0zM11 0h3v3h-3zM5.500 5h3v3h-3zM0 10h3v3H0zM11 10h3v3h-3z" fill="#e4e4e4"/></svg>Pattern
                    </div>
                </div>

                <!-- Styles box -->
                <div class="mt-[7px] h-[113px] bg-[#464646] border border-[#555] rounded-[1px] px-[11px]">
                    <div class="h-[32px] flex items-center border-b border-[#3f3f3f] pt-[2px] text-[#c8c8c8]">
                        <svg class="w-[14px] h-[14px] text-[#c8c8c8]"><use href="#gear"/></svg>
                        <span class="ml-[5px] text-[11.5px]">Styles:</span>
                        <span class="ml-[5px]">None</span>
                        <div class="ml-auto mr-[3px] w-0 h-0 border-x-[4px] border-x-transparent border-t-[5px] border-t-[#c8c8c8]"></div>
                    </div>
                    <div class="h-[38px] flex items-center pt-[2px] text-[#d0d0d0]">
                        Reference Asset
                        <div class="ml-auto w-[26px] h-[14px] mr-px rounded-full bg-[#8a8a8a] flex items-center">
                            <div class="w-[14px] h-[14px] rounded-full bg-[#464646] border-2 border-[#e0e0e0]"></div>
                        </div>
                    </div>
                    <div class="mt-[2px] grid grid-cols-[97px_98px] gap-x-[5px] text-[#7a7a7a]">
                        <div class="h-[28px] border border-[#5a5a5a] rounded-[2px] flex items-center pl-[9px] pt-[1px] gap-[9px]">
                            <svg class="w-[16px] h-[14px]" viewBox="0 0 16 14"><rect x="1.500" y="1.500" width="13" height="11" fill="none" stroke="#8a8a8a"/><path d="M2 11l4-4 3 3 2-2 3 3" fill="none" stroke="#8a8a8a"/><circle cx="11" cy="5" r="1" fill="#8a8a8a"/></svg>Artwork
                        </div>
                        <div class="h-[28px] border border-[#5a5a5a] rounded-[2px] flex items-center pl-[8px] pt-[1px] gap-[10px]">
                            <svg class="w-[16px] h-[16px]" viewBox="0 0 16 16"><circle cx="9" cy="10" r="5.500" fill="#777"/><path d="M1 1l7 7" stroke="#8a8a8a" stroke-width="3"/></svg>Picker
                        </div>
                    </div>
                </div>

                <!-- Settings box -->
                <div class="mt-[7px] h-[127px] bg-[#464646] border border-[#555] rounded-[1px] px-[9px]">
                    <div class="h-[38px] flex items-center border-b border-[#3f3f3f] pl-[2px] pb-[2px] text-[#c8c8c8]">
                        <svg class="w-[14px] h-[14px] text-[#c8c8c8]"><use href="#gear"/></svg>
                        <span class="ml-[5px] text-[11.5px]">Settings</span>
                        <div class="ml-auto mr-[5px] w-0 h-0 border-x-[4px] border-x-transparent border-t-[5px] border-t-[#c8c8c8]"></div>
                    </div>
                    <div class="mt-[19px] h-[21px] leading-[21px] text-[#c8c8c8]">Detail in vector graphics</div>
                    <div class="mt-[2px] relative h-[16px] flex items-center">
                        <div class="w-full h-[2px] bg-[#777]"></div>
                        <div class="absolute left-[95px] top-[2px] w-[12px] h-[12px] rounded-full bg-[#464646] border-2 border-[#e0e0e0]"></div>
                    </div>
                    <div class="h-[12px] flex justify-between leading-[12px] text-[#c8c8c8]"><span>Minimal</span><span>Complex</span></div>
                </div>

                <div class="h-[28px] pt-[8px] leading-[14px] text-[#bdbdbd]">Prompt</div>
                <div class="h-[41px] bg-[#444] border border-[#555] rounded-[1px] pl-[6px] pr-[28px] pt-[1px] relative text-[#e8e8e8] leading-[12px]">
                    Describe the vector graphic you want to generate
                    <svg class="absolute right-[4px] top-[4px] w-[17px] h-[18px]" viewBox="0 0 17 18"><path d="M6 15V12C4 10 5 6 8.500 6S13 10 11 12V15z" fill="none" stroke="#e8e8e8" stroke-width="1.300"/><path d="M6.500 17h4M8.500 0v3M2 3l2 2M15 3l-2 2M0 9h3M14 9h3" stroke="#e8e8e8"/></svg>
                </div>
                <div class="mt-[6px] h-[28px] bg-[#585858] rounded-[2px] flex items-center justify-center pt-[1px] gap-[5px] text-[#7d7d7d]">
                    <svg class="w-[15px] h-[15px]" viewBox="0 0 15 15"><path d="M9 2H1.500v12h11V7" fill="none" stroke="#7d7d7d" stroke-width="1.500"/><path d="M11 0l1 3 3 1-3 1-1 3-1-3-3-1 3-1zM6 6l.8 2.200L9 9l-2.200.8L6 12l-.8-2.200L3 9l2.200-.8z" fill="#7d7d7d"/></svg>
                    Generate (Beta)
                </div>
                <div class="h-[41px] pt-[20px] flex items-start justify-between pl-[5px] pr-[5px]">
                    <svg class="w-[14px] h-[14px]" viewBox="0 0 14 14"><circle cx="7" cy="7" r="6.200" fill="none" stroke="#d0d0d0" stroke-width="1.200"/><path d="M6 3h2v2H6zM6 6h2v5H6z" fill="#d0d0d0"/></svg>
                    <div class="mt-[5px] flex gap-[2px]">
                        <div class="w-[3px] h-[3px] rounded-full bg-[#d0d0d0]"></div>
                        <div class="w-[3px] h-[3px] rounded-full bg-[#d0d0d0]"></div>
                        <div class="w-[3px] h-[3px] rounded-full bg-[#d0d0d0]"></div>
                    </div>
                </div>
            </div>

            <!-- Document -->
            <div class="h-[131px] shrink-0 pl-[9px] border-b-[3px] border-[#464646]">
                <div class="h-[38px] pt-[12px] leading-[14px] text-[#bdbdbd]">Document</div>
                <div class="h-[20px] flex items-center">
                    <span class="w-[69px] text-right">Units:</span>
                    <div class="ml-[6px] w-[115px] h-[20px] bg-[#464646] border border-[#5a5a5a] rounded-[2px] flex items-center pl-[6px] text-[#ececec]">Inches<svg class="ml-auto mr-[5px] w-[9px] h-[6px] text-[#e0e0e0]"><use href="#chev"/></svg></div>
                </div>
                <div class="mt-[8px] h-[20px] flex items-center">
                    <span class="w-[69px] text-right">Artboard:</span>
                    <div class="ml-[6px] w-[74px] h-[20px] flex border border-[#5a5a5a] rounded-[2px] text-[#ececec]">
                        <div class="w-[56px] bg-[#464646] pl-[4px] leading-[18px]">1</div>
                        <div class="flex-1 flex items-center justify-center border-l border-[#5a5a5a] bg-[#4c4c4c]"><svg class="w-[9px] h-[6px] text-[#e0e0e0]"><use href="#chev"/></svg></div>
                    </div>
                    <div class="ml-[13px] w-0 h-0 border-y-[4px] border-y-transparent border-r-[5px] border-r-[#6f6f6f]"></div>
                    <div class="ml-[16px] w-0 h-0 border-y-[4px] border-y-transparent border-l-[5px] border-l-[#6f6f6f]"></div>
                </div>
                <div class="mt-[9px] ml-[75px] w-[115px] h-[20px] border border-[#7a7a7a] rounded-[2px] text-center leading-[18px] text-[#f0f0f0]">Edit Artboards</div>
            </div>

            <!-- Ruler & Grids -->
            <div class="h-[38px] shrink-0 flex items-center pl-[9px] pt-[2px] border-b-[3px] border-[#464646]">
                <span class="w-[86px] text-[#bdbdbd]">Ruler &amp; Grids</span>
                <div class="w-[22px] h-[22px] rounded-[2px] bg-[#2f2f2f] flex items-center justify-center">
                    <svg class="w-[14px] h-[14px]" viewBox="0 0 14 14"><path fill="#f0f0f0" d="M0 0h14v4H4v10H0z"/><path d="M6 1.500h1M9 1.500h1M12 1.500h1M1.500 6v1M1.500 9v1M1.500 12v1" stroke="#2f2f2f"/></svg>
                </div>
                <svg class="ml-[9px] w-[16px] h-[16px]" viewBox="0 0 16 16"><rect x=".5" y=".5" width="15" height="15" fill="none" stroke="#bdbdbd"/><path d="M5.500 0v16M10.500 0v16M0 5.500h16M0 10.500h16" stroke="#bdbdbd"/></svg>
                <svg class="ml-[14px] w-[16px] h-[16px]" viewBox="0 0 16 16"><rect width="16" height="16" fill="url(#chk)"/><rect x=".5" y=".5" width="15" height="15" fill="none" stroke="#bdbdbd"/></svg>
            </div>
            <!-- Guides -->
            <div class="h-[38px] shrink-0 flex items-center pl-[9px] pt-[2px] border-b-[3px] border-[#464646]">
                <span class="w-[86px] text-[#bdbdbd]">Guides</span>
                <div class="w-[22px] h-[22px] rounded-[2px] bg-[#2f2f2f] flex items-center justify-center">
                    <svg class="w-[16px] h-[14px]" viewBox="0 0 16 14"><path d="M4.500 0v14M9.500 0v14M0 4.500h16M0 9.500h16" stroke="#f0f0f0"/></svg>
                </div>
                <svg class="ml-[10px] w-[18px] h-[16px]" viewBox="0 0 18 16"><path d="M3.500 0v16M7.500 0v16M0 5.500h10M0 10.500h10" stroke="#b4b4b4"/><path d="M10 9h8v7h-8zM11.500 9V6.500a2.500 2.500 0 015 0" fill="#b4b4b4" stroke="#b4b4b4"/></svg>
                <div class="ml-[9px] w-[22px] h-[22px] rounded-[2px] bg-[#2f2f2f] flex items-center justify-center">
                    <svg class="w-[17px] h-[16px]" viewBox="0 0 17 16"><path d="M5.500 0v15M0 5.500h15M6 5.500l4-3M6 5.500l4 3" stroke="#f0f0f0" fill="none"/><path d="M13 7l-4 5h3l-1 4 5-6h-3z" fill="#f0f0f0"/></svg>
                </div>
            </div>
            <!-- Snap Options -->
            <div class="h-[38px] shrink-0 flex items-center pl-[9px] pt-[2px] border-b-[3px] border-[#464646]">
                <span class="w-[86px] text-[#bdbdbd]">Snap Options</span>
                <div class="w-[22px] h-[22px] rounded-[2px] bg-[#2f2f2f] flex items-center justify-center">
                    <svg class="w-[15px] h-[16px]" viewBox="0 0 15 16"><path d="M1.500 0v16" stroke="#f0f0f0"/><path d="M0 6h3v4H0z" fill="#f0f0f0"/><path d="M6 4h5a3.500 3.500 0 010 7H6" fill="none" stroke="#f0f0f0" stroke-width="2"/></svg>
                </div>
                <svg class="ml-[11px] w-[16px] h-[18px]" viewBox="0 0 16 18"><path d="M.5 0h5v18h-5zM.5 4.500h5M.5 9h5M.5 13.500h5" fill="none" stroke="#b4b4b4"/><path d="M8 5h4a3.500 3.500 0 010 7H8" fill="none" stroke="#b4b4b4" stroke-width="2"/></svg>
                <div class="ml-[10px] w-[22px] h-[22px] rounded-[2px] bg-[#2f2f2f] flex items-center justify-center">
                    <svg class="w-[16px] h-[18px]" viewBox="0 0 16 18"><path fill="#fff" d="M0 0h4v5H0zM0 7h4v4H0zM0 13h4v5H0z"/><path d="M7 5h5a3.500 3.500 0 010 8H7" fill="none" stroke="#fff" stroke-width="2"/></svg>
                </div>
            </div>

            <!-- Preferences -->
            <div class="pl-[9px]">
                <div class="h-[33px] pt-[10px] leading-[14px] text-[#bdbdbd]">Preferences</div>
                <div class="h-[20px] flex items-center -ml-[1px]">
                    <span class="w-[97px] whitespace-nowrap">Keyboard Increment:</span>
                    <div class="ml-[2px] w-[59px] h-[20px] bg-[#464646] border border-[#5a5a5a] pl-[4px] leading-[18px] text-[#ececec] rounded-[1px]">0.0139 in</div>
                </div>
                <div class="mt-[12px] h-[14px] flex items-center gap-[3px] ml-[3px]"><div class="w-[12px] h-[12px] border border-[#bdbdbd] rounded-[2px]"></div>Use Preview Bounds</div>
                <div class="mt-[10px] h-[14px] flex items-center gap-[3px] ml-[3px]"><div class="w-[12px] h-[12px] border border-[#bdbdbd] rounded-[2px]"></div>Scale Corners</div>
                <div class="mt-[10px] h-[14px] flex items-center gap-[3px] ml-[3px]">
                    <svg class="w-[12px] h-[12px]" viewBox="0 0 12 12"><rect width="12" height="12" rx="2" fill="#c8c8c8"/><path d="M2.500 6l2.500 3 4.500-6" fill="none" stroke="#444" stroke-width="1.800"/></svg>Scale Strokes &amp; Effects
                </div>
            </div>
        </div>
    </div>
</div>
</body>
</html>
